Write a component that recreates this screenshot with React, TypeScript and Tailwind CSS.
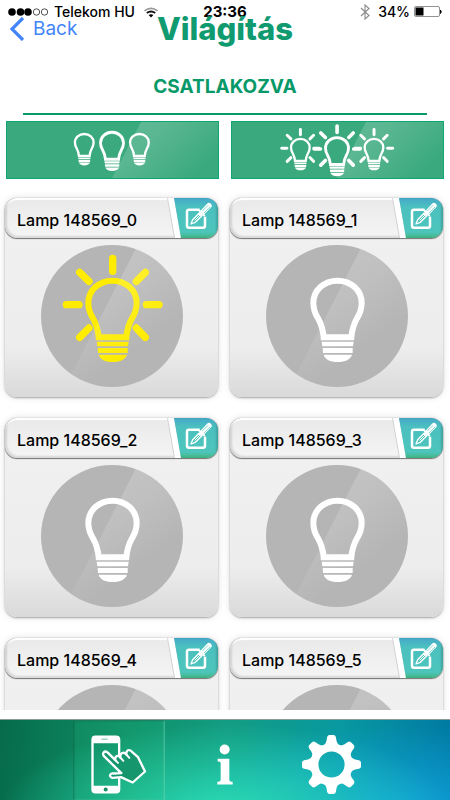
import { useState } from 'react'

const BODY =
  'M297 440 C295 416 289 399 280 383 C270 367 266 353 266 337 C266 299 298 270 338.5 270 C379 270 411 299 411 337 C411 353 407 367 397 383 C388 399 382 416 380 440 Z'

const rays = [
  'M339 203 V242',
  'M240 245 L268 272',
  'M437 245 L410 272',
  'M200 342 H238',
  'M440 342 H478',
  'M240 440 L268 412',
  'M437 440 L410 412',
]

function Bulb({ lit, color, spread = 1 }: { lit?: boolean; color: string; spread?: number }) {
  return (
    <g fill={color} stroke="none">
      <path d={BODY} fill="none" stroke={color} strokeWidth="18" />
      <path d="M291 453 H387 L385 467 H293 Z" />
      <path d="M294 472 H384 V487 H295 Z" />
      <path d="M297 492 H382 C378 506 362 514 339 514 C316 514 301 506 297 492 Z" />
      {lit && (
        <g
          transform={`translate(339 342) scale(${spread}) translate(-339 -342)`}
          fill="none" stroke={color} strokeWidth="22" strokeLinecap="round"
        >
          {rays.map((d) => <path key={d} d={d} />)}
        </g>
      )}
    </g>
  )
}

function Trio({ lit, left, right, small, big }: { lit?: boolean; left: number; right: number; small: number; big: number }) {
  const id = lit ? 'glare-on' : 'glare-off'
  return (
    <svg viewBox="0 0 639 174" preserveAspectRatio="xMidYMid slice" className="block h-full w-full" aria-hidden="true">
      <defs>
        <linearGradient id={id} x1="0" y1="0" x2="1" y2="0.6">
          <stop offset="0" stopColor="#fff" stopOpacity="0.2" />
          <stop offset="0.4" stopColor="#fff" stopOpacity="0.16" />
          <stop offset="1" stopColor="#fff" stopOpacity="0" />
        </linearGradient>
      </defs>
      <g transform={`translate(${left} ${small}) scale(0.39) translate(-338.5 -261)`}><Bulb lit={lit} color="#fff" spread={1.04} /></g>
      <g transform={`translate(${right} ${small}) scale(0.39) translate(-338.5 -261)`}><Bulb lit={lit} color="#fff" spread={1.04} /></g>
      <g transform={`translate(318 ${big}) scale(0.48) translate(-338.5 -261)`}><Bulb lit={lit} color="#fff" spread={1.04} /></g>
      <path d="M407 0 H639 V174 H317 Z" fill={`url(#${id})`} />
    </svg>
  )
}

function EditIcon() {
  return (
    <svg viewBox="0 0 84 84" className="h-7 w-7" fill="none" aria-hidden="true">
      <path d="M47 23 H15 Q9 23 9 29 V71 Q9 77 15 77 H57 Q63 77 63 71 V44" stroke="#fff" strokeWidth="7.5" />
      <path d="M21 66 L26 53 L45 34 L53 42 L34 61 Z" stroke="#fff" strokeWidth="4" strokeLinejoin="round" />
      <path d="M32 55 L48 39" stroke="#fff" strokeWidth="3" />
      <path d="M46 26 L61 41" stroke="#fff" strokeWidth="6" strokeLinecap="round" />
      <path d="M54 33 L75 11" stroke="#fff" strokeWidth="16" strokeLinecap="round" />
      <path d="M55 27 L72 10 M60 33 L78 15" stroke="#4cc4bc" strokeWidth="2" />
    </svg>
  )
}

function LampCard({ name, initial }: { name: string; initial: boolean }) {
  const [on, setOn] = useState(initial)
  const id = 'shine-' + name.replace(' ', '-')
  return (
    <article className="h-[199px] rounded-xl bg-linear-to-b from-[#f1f1f1] via-[#ededed] via-75% to-[#d9d9d9] shadow-[0_1px_2px_rgba(0,0,0,0.3),0_0_7px_rgba(0,0,0,0.14)]">
      <div className="flex h-10 overflow-hidden rounded-xl bg-[#d2d2d2] shadow-[0_1px_1px_rgba(0,0,0,0.5),0_0_1px_rgba(0,0,0,0.35)]">
        <h2 className="flex min-w-0 flex-1 items-center rounded-l-xl bg-linear-to-b from-[#e9e9e9] to-[#f5f5f5] pt-1 pl-3 text-base font-medium text-black shadow-[inset_2px_-2px_2px_rgba(0,0,0,0.12),inset_0_2px_1px_#fff] [clip-path:polygon(0_0,calc(100%-7px)_0,100%_100%,0_100%)]">
          {name}
        </h2>
        <span className="-mr-[7px] -ml-1.5 w-[13px] bg-white [clip-path:polygon(0_0,6px_0,100%_100%,7px_100%)]" />
        <button
          type="button"
          aria-label={`${name} szerkesztése`}
          className="flex w-11 items-center justify-center bg-[linear-gradient(180deg,#45a9c9_0%,#4bc0bf_22%,#4dc5bb_85%,#42b583_100%)] pb-1 pl-1 shadow-[inset_-2px_0_2px_rgba(0,0,0,0.15)] [clip-path:polygon(0_0,100%_0,100%_100%,7px_100%)]"
        >
          <EditIcon />
        </button>
      </div>
      <button
        type="button"
        aria-label={name}
        aria-pressed={on}
        onClick={() => setOn(!on)}
        className="mx-auto mt-[7px] block h-[142px] w-[142px] overflow-hidden rounded-full bg-[#b5b5b5]"
      >
        <svg viewBox="124 163 426 426" className="block h-full w-full">
          <defs>
            <linearGradient id={id} x1="0.2" y1="0.1" x2="0.7" y2="0.9">
              <stop offset="0" stopColor="#fff" stopOpacity="0.22" />
              <stop offset="0.4" stopColor="#fff" stopOpacity="0.14" />
              <stop offset="0.8" stopColor="#fff" stopOpacity="0" />
            </linearGradient>
          </defs>
          <Bulb lit={on} color={on ? '#ffec00' : '#fff'} />
          <path d="M414 163 H550 V589 H195 Z" fill={`url(#${id})`} />
        </svg>
      </button>
    </article>
  )
}

function StatusBar() {
  return (
    <div className="grid h-5 grid-cols-[1fr_auto_1fr] items-center px-2 pt-1 text-sm leading-4 text-black">
      <div className="flex items-center">
        <svg viewBox="0 0 42 10" className="mr-1 h-2.5 w-[42px]" aria-hidden="true">
          <g fill="#000"><circle cx="4" cy="5" r="3.8" /><circle cx="12.5" cy="5" r="3.8" /><circle cx="20" cy="5" r="3.8" /></g>
          <g fill="none" stroke="#222" strokeWidth="0.8"><circle cx="28.5" cy="5" r="3.2" /><circle cx="36.5" cy="5" r="3.2" /></g>
        </svg>
        <span className="font-medium">Telekom HU</span>
        <svg viewBox="0 0 16 11" className="ml-2 h-[11px] w-4" fill="none" aria-hidden="true">
          <path d="M1.5 3.8 Q8 -1.2 14.5 3.8" stroke="#999" strokeWidth="1.7" />
          <path d="M3.8 6 Q8 3 12.2 6" stroke="#111" strokeWidth="1.8" />
          <path d="M8 10.5 L5.6 8 Q8 6.4 10.4 8 Z" fill="#000" />
        </svg>
      </div>
      <span className="text-[15px] leading-4 font-bold">23:36</span>
      <div className="flex items-center justify-end">
        <svg viewBox="0 0 10 16" className="mr-2 h-4 w-2.5" fill="none" stroke="#8a8a8a" strokeWidth="1.1" aria-hidden="true">
          <path d="M1 4 L9 11.5 L5 15 V1 L9 4.5 L1 12" />
        </svg>
        <span className="font-medium">34%</span>
        <svg viewBox="0 0 28 12" className="ml-1 h-3 w-7" aria-hidden="true">
          <rect x="0.5" y="0.5" width="25" height="10" rx="1.5" fill="none" stroke="#777" strokeWidth="0.8" />
          <rect x="1.5" y="1.5" width="8" height="8" fill="#000" />
          <path d="M26.5 4 Q28 5.5 26.5 7.5 Z" fill="#000" stroke="#000" />
        </svg>
      </div>
    </div>
  )
}

function PhoneIcon() {
  return (
    <svg viewBox="0 0 168 176" className="h-[59px] w-14" fill="none" aria-hidden="true">
      <path fillRule="evenodd" fill="#fff" d="M13 1 H75 Q88 1 88 14 V162 Q88 175 75 175 H13 Q1 175 1 162 V14 Q1 1 13 1 Z M8 24 V152 H81 V24 Z" />
      <path d="M31 12 H50" stroke="#2a9b76" strokeWidth="2" />
      <circle cx="44" cy="163" r="6" fill="#128f65" />
      {/* pointing hand */}
      <path
        d="M91 114 L39 63 C31 54 42 44 51 53 L73 75 C71 62 81 58 88 67 C87 52 98 49 106 58 C105 44 115 41 123 50 L141 66 L162 109 L125 142 L90 126 L64 128 C53 125 56 113 68 115 Z"
        fill="#15966d" stroke="#fff" strokeWidth="7" strokeLinejoin="round"
      />
      <path d="M73 75 L81 83 M88 67 L97 77 M106 58 L115 68" stroke="#fff" strokeWidth="6" strokeLinecap="round" />
    </svg>
  )
}

function InfoIcon() {
  return (
    <svg viewBox="0 0 48 122" className="h-[41px] w-4" fill="#fff" aria-hidden="true">
      <circle cx="23" cy="16" r="15" />
      <path d="M2 44 H37 V108 Q37 112 47 113 V121 H1 V113 Q11 112 11 108 V56 Q11 52 2 52 Z" />
    </svg>
  )
}

function GearIcon() {
  return (
    <svg viewBox="-88 -88 176 176" className="h-[59px] w-[59px]" fill="#fff" aria-hidden="true">
      <circle r="51" fill="none" stroke="#fff" strokeWidth="24" />
      {[0, 45, 90, 135, 180, 225, 270, 315].map((a) => (
        <path key={a} transform={`rotate(${a})`} d="M-25 -57 Q-17 -61 -15 -70 L-13 -82 Q-11 -88 -6 -88 H6 Q11 -88 13 -82 L15 -70 Q17 -61 25 -57 Z" />
      ))}
    </svg>
  )
}

const lamps = [0, 1, 2, 3, 4, 5].map((n) => ({ name: `Lamp 148569_${n}`, on: n === 0 }))

export default function App() {
  return (
    <div className="flex h-screen flex-col bg-white font-['Inter','Liberation_Sans',sans-serif]">
      <StatusBar />
      <header className="grid h-[18px] grid-cols-[1fr_auto_1fr] grid-rows-[18px] items-center px-2">
        <a href="#back" className="flex items-center text-[19px] leading-4 text-[#4285fb]">
          <svg viewBox="0 0 17 24" className="mr-2 h-6 w-[17px]" fill="none" stroke="#4285fb" strokeWidth="3.2" aria-hidden="true">
            <path d="M15 1 L4 12 L15 23" />
          </svg>
          Back
        </a>
        <h1 className="text-[31px] leading-4 font-extrabold text-[#109a70]">Világítás</h1>
      </header>
      <p className="mt-[37px] text-center text-[19px] leading-6 font-bold text-[#079968]">CSATLAKOZVA</p>
      <hr className="mx-[23px] mt-3.5 border-t-2 border-[#079968]" />
      <div className="mt-1.5 grid grid-cols-2 gap-3 px-1.5">
        <button type="button" aria-label="Összes lámpa ki" className="h-[58px] border border-[#12a574] bg-[#3aa97d]">
          <Trio left={234} right={401} small={35} big={29} />
        </button>
        <button type="button" aria-label="Összes lámpa be" className="h-[58px] border border-[#12a574] bg-[#3aa97d]">
          <Trio lit left={207} right={430} small={50} big={45} />
        </button>
      </div>
      <main className="mb-[9px] min-h-0 flex-1 overflow-y-auto pt-[19px] [scrollbar-width:none]">
        <div className="grid grid-cols-2 gap-x-3 gap-y-[21px] pr-[7px] pb-5 pl-[5px]">
          {lamps.map((l) => <LampCard key={l.name} name={l.name} initial={l.on} />)}
        </div>
      </main>
      <nav className="flex h-[81px] shrink-0 justify-center border-t border-[#8a9c98] bg-[radial-gradient(ellipse_50%_110%_at_50%_115%,#2bdcb4_0%,#2bdcb400_100%),radial-gradient(ellipse_50%_110%_at_88%_115%,#10a2dc_0%,#10a2dc00_100%),linear-gradient(95deg,#066b4a_0%,#0f8f66_28%,#139d83_50%,#0898a0_75%,#0078a3_100%)]">
        <button type="button" aria-label="Vezérlés" className="flex w-[92px] items-center justify-center bg-[#2cc98f]/15 pt-2 shadow-[inset_1px_1px_2px_rgba(0,60,40,0.4),inset_-1px_0_2px_rgba(120,220,190,0.6)]">
          <PhoneIcon />
        </button>
        <button type="button" aria-label="Információ" className="flex w-[120px] items-center justify-center pt-2">
          <InfoIcon />
        </button>
        <button type="button" aria-label="Beállítások" className="flex w-[92px] items-center justify-center pt-2">
          <GearIcon />
        </button>
      </nav>
    </div>
  )
}
